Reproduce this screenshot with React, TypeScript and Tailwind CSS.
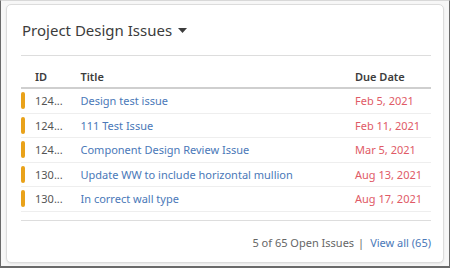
import React from "react";

const rows = [
  { id: "124...", title: "Design test issue", due: "Feb 5, 2021" },
  { id: "124...", title: "111 Test Issue", due: "Feb 11, 2021" },
  { id: "124...", title: "Component Design Review Issue", due: "Mar 5, 2021" },
  { id: "130...", title: "Update WW to include horizontal mullion", due: "Aug 13, 2021" },
  { id: "130...", title: "In correct wall type", due: "Aug 17, 2021" },
];

export default function App() {
  return (
    <div
      className="w-[450px] h-[268px] bg-[#f7f7f7] border-l-[1px] border-r-[1px] border-b-[2px] border-t-[1px] border-l-[#6a6a6a] border-r-[#6a6a6a] border-b-[#6a6a6a] border-t-[#d8d8d8] pl-[5px] pr-[5px] pt-[3px] pb-[3px]"
      style={{ fontFamily: '"Noto Sans", "Open Sans", sans-serif' }}
    >
      <div className="h-full w-full bg-white border border-[#dcdcdc] rounded-[5px] shadow-[0_1px_2px_rgba(0,0,0,0.08)] pl-[14px] pr-[12px] pt-[13px] flex flex-col">
        <div className="h-[24px] flex items-center gap-[6px] pl-[1px]">
          <span className="text-[15px] leading-[24px] text-[#3c3c3c]">Project Design Issues</span>
          <svg width="9" height="5" viewBox="0 0 9 5" className="mt-[1px]">
            <path d="M0 0 L9 0 L4.5 5 Z" fill="#3c3c3c" />
          </svg>
        </div>
        <div className="mt-[13px] border-t border-[#dddddd]" />
        <div className="h-[33px] flex items-end pb-[3px] border-b-[2px] border-[#cfcfcf] text-[11px] leading-[15px] font-semibold text-[#3c3c3c]">
          <div className="w-[14px]" />
          <div className="w-[45.5px]">ID</div>
          <div className="flex-1">Title</div>
          <div className="w-[76px]">Due Date</div>
        </div>
        {rows.map((r, i) => (
          <div
            key={i}
            className="h-[24.5px] flex items-center border-b border-[#eeeeee] text-[11px] leading-[15px]"
          >
            <div className="w-[14px] flex items-center">
              <div className="w-[4px] h-[17px] rounded-[2px] bg-[#e9a21a]" />
            </div>
            <div className="w-[45.5px] text-[#555555]">{r.id}</div>
            <div className="flex-1 text-[#4a78b8] truncate">{r.title}</div>
            <div className="w-[76px] text-[#e05a66]">{r.due}</div>
          </div>
        ))}
        <div className="mt-[8px] border-t border-[#dddddd]" />
        <div className="flex justify-end items-center mt-[14px] text-[11px] leading-[16px]">
          <span className="text-[#666666]">5 of 65 Open Issues</span>
          <span className="text-[#666666] ml-[4px]">|</span>
          <span className="text-[#4a78b8] ml-[6px]">View all (65)</span>
        </div>
      </div>
    </div>
  );
}
